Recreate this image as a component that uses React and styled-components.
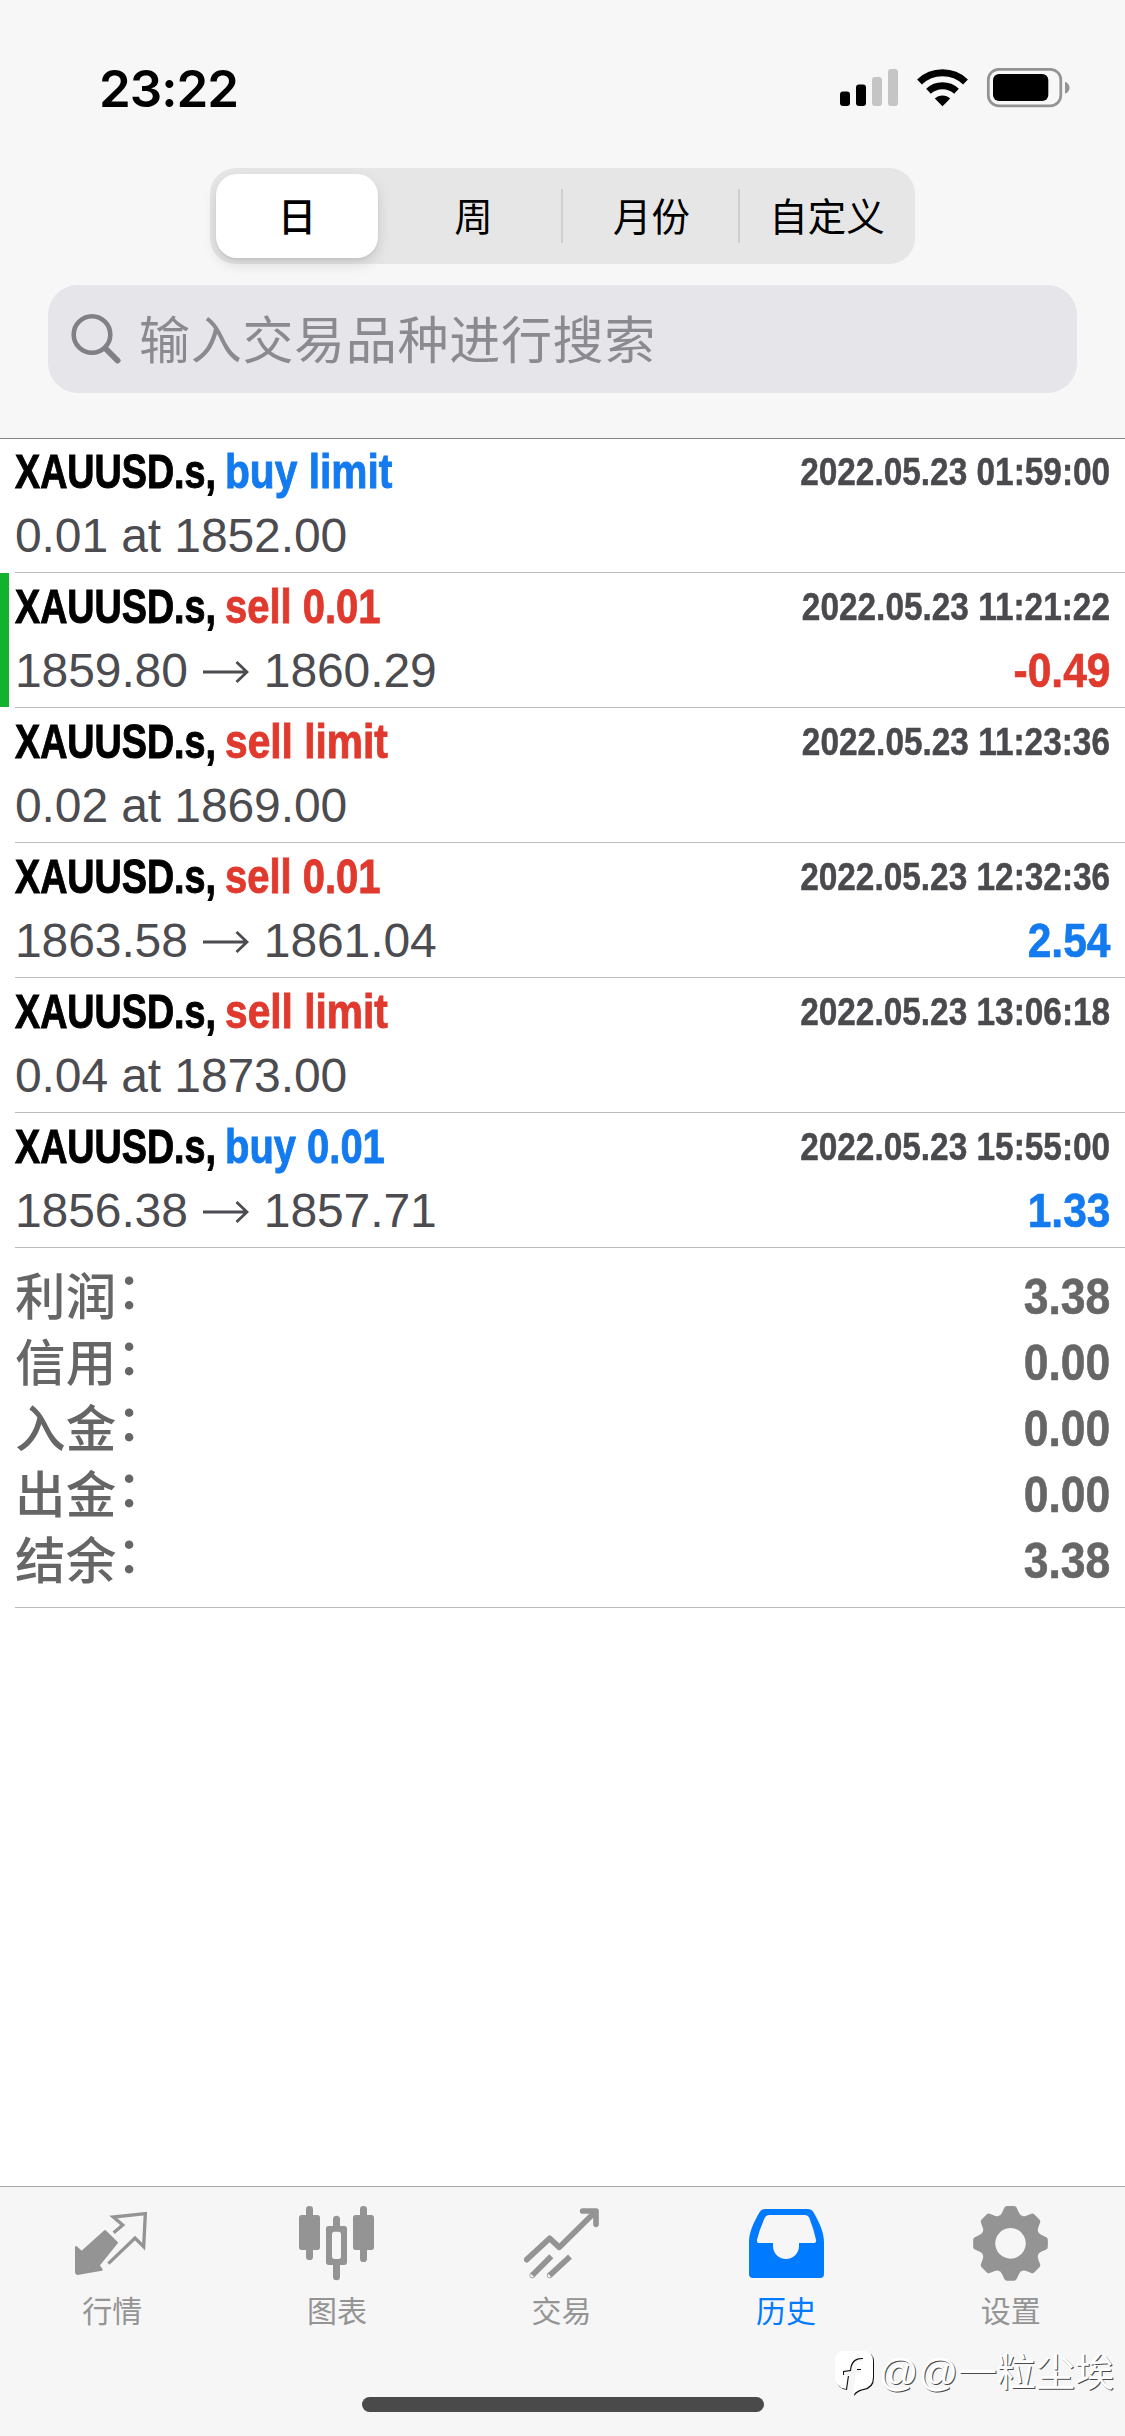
import React from "react";
import styled, { createGlobalStyle } from "styled-components";

const BLUE = "#147aef";
const RED = "#e0392d";

const GlobalStyle = createGlobalStyle`
  * { box-sizing: border-box; }
  body { margin: 0; background: #fff; }
`;

const Screen = styled.div`
  width: 1125px;
  height: 2436px;
  display: flex;
  flex-direction: column;
  overflow: hidden;
  background: #fff;
  font-family: "Liberation Sans", "Noto Sans CJK SC", sans-serif;
`;

const Header = styled.header`
  flex: none;
  height: 439px;
  margin-bottom: -1px;
  padding: 64px 48px 0;
  background: #f7f7f7;
  border-bottom: 1px solid #858585;
  display: flex;
  flex-direction: column;
  align-items: center;
`;

const StatusBar = styled.div`
  align-self: stretch;
  height: 48px;
  margin-bottom: 56px;
  padding: 0 7px 0 51px;
  display: flex;
  justify-content: space-between;
  align-items: center;
`;

const Clock = styled.time`
  padding-top: 2px;
  font: 600 51px/48px Inter, sans-serif;
  letter-spacing: -1px;
  color: #000;
`;

const StatusIcons = styled.svg`
  display: block;
  width: 230px;
  height: 40px;
`;

const Segments = styled.div`
  width: 705px;
  height: 96px;
  padding: 6px 0 6px 6px;
  display: flex;
  align-items: center;
  background: #e6e6e6;
  border-radius: 26px;
`;

const Segment = styled.button`
  flex: none;
  width: ${(p) => p.$width}px;
  height: ${(p) => (p.$active ? 84 : 54)}px;
  border: 0;
  border-left: ${(p) => (p.$divided ? "2px solid #cfcfd1" : "0")};
  padding: 0 0 ${(p) => (p.$active ? 4 : 0)}px ${(p) => p.$inset || 0}px;
  border-radius: ${(p) => (p.$active ? "21px" : "0")};
  background: ${(p) => (p.$active ? "#fff" : "transparent")};
  box-shadow: ${(p) => (p.$active ? "0 6px 14px rgba(0,0,0,.12), 0 2px 3px rgba(0,0,0,.06)" : "none")};
  color: #000;
  font: ${(p) => (p.$active ? 500 : 400)} 38.5px/50px "Noto Sans CJK SC", sans-serif;

  span {
    display: block;
    margin-top: ${(p) => (p.$active ? 0 : -4)}px;
  }
`;

const Search = styled.div`
  align-self: stretch;
  height: 108px;
  margin-top: 21px;
  padding-left: 23px;
  display: flex;
  align-items: center;
  gap: 18px;
  background: #e5e5ea;
  border-radius: 30px;
  color: #8a8a90;
  font: 400 51px/104px "Noto Sans CJK SC", sans-serif;
  letter-spacing: 0.7px;
`;

const Placeholder = styled.span`
  margin-top: -5px;
`;

const SearchIcon = styled.svg`
  width: 50px;
  height: 52px;
  flex: none;
`;

const Deal = styled.article`
  flex: none;
  height: 135px;
  display: flex;
`;

const Marker = styled.div`
  width: 9px;
  height: 134px;
  margin-right: 6px;
  background: ${(p) => (p.$on ? "#12b32c" : "transparent")};
`;

const DealBody = styled.div`
  flex: 1;
  padding: 2px 15px 0 0;
  border-bottom: 1px solid #bcbcbe;
`;

const Line = styled.div`
  height: 64px;
  display: flex;
  line-height: 64px;
  white-space: nowrap;
`;

const Symbol = styled.span`
  flex: 0 0 210px;
  width: 210px;
  font-size: 48px;
  font-weight: 700;
  color: #000;
  -webkit-text-stroke: 1px currentColor;
  transform: scaleX(0.785);
  transform-origin: left;
`;

const Action = styled.span`
  flex: 1;
  font-size: 48px;
  font-weight: 700;
  color: ${(p) => p.$color};
  -webkit-text-stroke: 0.9px currentColor;
  transform: scaleX(${(p) => (p.$numeric ? 0.832 : 0.848)});
  transform-origin: left;
`;

const Stamp = styled.time`
  font-size: 39px;
  line-height: 63px;
  font-weight: 700;
  color: #4a4a4e;
  -webkit-text-stroke: 0.5px currentColor;
  transform: scaleX(0.856);
  transform-origin: right;
`;

const Prices = styled.span`
  flex: 1;
  display: flex;
  align-items: center;
  gap: 14.5px;
  font-size: 48px;
  letter-spacing: -0.1px;
  color: #4c4c50;
`;

const Arrow = styled.svg`
  width: 47px;
  height: 24px;
`;

const Profit = styled.span`
  font-size: 48px;
  font-weight: 700;
  color: ${(p) => p.$color};
  -webkit-text-stroke: 0.7px currentColor;
  transform: scaleX(0.885);
  transform-origin: right;
`;

const Summary = styled.dl`
  flex: none;
  height: 360px;
  margin: 0 0 0 15px;
  padding: 15px 15px 0 0;
  border-bottom: 1px solid #bcbcbe;
`;

const SummaryRow = styled.div`
  height: 66px;
  display: flex;
  justify-content: space-between;
  color: #666;
`;

const Label = styled.dt`
  font: 500 50.5px/60px "Noto Sans CJK SC", sans-serif;
  letter-spacing: 0.3px;
`;

const Colon = styled.span`
  display: inline-block;
  transform: translateY(-6px);
`;

const Value = styled.dd`
  margin: 0;
  font-size: 50px;
  font-weight: 700;
  line-height: 68px;
  -webkit-text-stroke: 0.6px currentColor;
  transform: scaleX(0.89);
  transform-origin: right;
`;

const TabBar = styled.nav`
  position: relative;
  height: 250px;
  flex: none;
  margin-top: auto;
  padding: 18px 2px 0 0;
  display: grid;
  grid-template-columns: repeat(5, 1fr);
  grid-template-rows: 192px 15px;
  background: #f6f6f6;
  border-top: 1px solid #a8a8a8;
`;

const Tab = styled.a`
  display: flex;
  flex-direction: column;
  align-items: center;
  color: ${(p) => (p.$active ? "#007aff" : "#949494")};
`;

const TabIcon = styled.svg`
  display: block;
  width: 75px;
  height: 76px;
  fill: currentColor;
  stroke-linejoin: round;
`;

const TabLabel = styled.span`
  margin-top: 6px;
  font: 400 30px/44px "Noto Sans CJK SC", sans-serif;
`;

const HomeIndicator = styled.div`
  grid-column: 1 / -1;
  justify-self: center;
  width: 402px;
  height: 15px;
  margin-left: 3px;
  border-radius: 8px;
  background: #4a4a4a;
`;

const Watermark = styled.div`
  position: absolute;
  right: 11px;
  bottom: 38px;
  display: flex;
  align-items: center;
  gap: 5px;
  color: #fff;
  font: 400 39px/50px "Liberation Sans", "Noto Sans CJK SC", sans-serif;
  white-space: nowrap;
  text-shadow: 1px 1px 0 #4a4a4a;
`;

const WatermarkLogo = styled.svg`
  width: 40px;
  height: 46px;
  filter: drop-shadow(1.5px 1.5px 0 #111);
`;

const deals = [
  { action: "buy limit", color: BLUE, at: "2022.05.23 01:59:00", order: "0.01 at 1852.00" },
  { action: "sell 0.01", color: RED, at: "2022.05.23 11:21:22", from: "1859.80", to: "1860.29", profit: "-0.49", marked: true },
  { action: "sell limit", color: RED, at: "2022.05.23 11:23:36", order: "0.02 at 1869.00" },
  { action: "sell 0.01", color: RED, at: "2022.05.23 12:32:36", from: "1863.58", to: "1861.04", profit: "2.54" },
  { action: "sell limit", color: RED, at: "2022.05.23 13:06:18", order: "0.04 at 1873.00" },
  { action: "buy 0.01", color: BLUE, at: "2022.05.23 15:55:00", from: "1856.38", to: "1857.71", profit: "1.33" },
];

const totals = [
  ["利润", "3.38"],
  ["信用", "0.00"],
  ["入金", "0.00"],
  ["出金", "0.00"],
  ["结余", "3.38"],
];

const QuotesIcon = () => (
  <>
    <path d="M90 78L126 113L71 181L80 194L7 207L3 203L3 126L20 141Z" stroke="currentColor" strokeWidth="6" />
    <path d="M116 83L143 60L115 36L211 26L206 125L180 99L100 176" fill="none" stroke="currentColor" strokeWidth="10" strokeLinejoin="miter" />
  </>
);

const ChartIcon = () => (
  <>
    <rect x="21" y="3" width="21" height="162" rx="10" />
    <rect y="30" width="63" height="105" rx="8" />
    <path d="M102 63V43a10.500 10.500 0 0 1 21 0V63H136a8 8 0 0 1 8 8V172a8 8 0 0 1-8 8H123v35a10.500 10.500 0 0 1-21 0V180H89a8 8 0 0 1-8-8V71a8 8 0 0 1 8-8ZM107 80a8 8 0 0 0-8 8v66a8 8 0 0 0 8 8h11a8 8 0 0 0 8-8V88a8 8 0 0 0-8-8Z" fillRule="evenodd" />
    <rect x="183" y="3" width="21" height="168" rx="10" />
    <rect x="162" y="30" width="63" height="105" rx="8" />
  </>
);

const TradeIcon = () => (
  <g fill="none" stroke="currentColor" strokeWidth="17">
    <path d="M8 164L77 100L106 127L214 20" strokeLinecap="round" />
    <path d="M176 18H216V58" strokeLinecap="round" />
    <path d="M25 211L82 154M77 211L138 155" />
    <circle cx="25" cy="211" r="1" strokeWidth="15" />
    <circle cx="77" cy="211" r="1" strokeWidth="15" />
  </g>
);

const HistoryIcon = () => (
  <path
    fillRule="evenodd"
    d="M48 12H176Q187 12 193 21C212 54 225 82 225 112V207Q225 219 213 219H12Q0 219 0 207V112C0 82 13 54 32 21Q37 12 48 12ZM62 30Q51 30 47 39Q32 72 24 104Q22 114 32 114H72V123C72 145 89 162 111 162S150 145 150 123V114H193Q203 114 201 104Q194 72 181 39Q177 30 167 30Z"
  />
);

const SettingsIcon = () => (
  <>
    <path
      fillRule="evenodd"
      d="M112.500 27a88 88 0 1 0 .01 0ZM112.500 69a46 46 0 1 1-.01 0Z"
    />
    {[0, 45, 90, 135, 180, 225, 270, 315].map((a) => (
      <path
        key={a}
        transform={`rotate(${a} 112.500 115)`}
        d="M94 8Q96 3 102 3H123Q129 3 131 8L138 23Q141 31 150 34L140 50H85L75 34Q84 31 87 23Z"
      />
    ))}
  </>
);

const tabs = [
  { label: "行情", Icon: QuotesIcon },
  { label: "图表", Icon: ChartIcon },
  { label: "交易", Icon: TradeIcon },
  { label: "历史", Icon: HistoryIcon, active: true },
  { label: "设置", Icon: SettingsIcon },
];

export default function App() {
  return (
    <Screen>
      <GlobalStyle />
      <Header>
        <StatusBar>
          <Clock>23:22</Clock>
          <StatusIcons viewBox="840 69 230 40">
            <rect x="840" y="92.500" width="10" height="14.500" rx="3" />
            <rect x="856" y="85.500" width="10" height="21.500" rx="3" />
            <rect x="872" y="78" width="10" height="29" rx="3" fill="#c5c5c5" />
            <rect x="888" y="70" width="10" height="37" rx="3" fill="#c5c5c5" />
            <path d="M942.500 107.300L934.800 99.600A11 11 0 0 1 950.200 99.600Z" />
            <g fill="none" stroke="#000">
              <path d="M919.500 83A33.500 33.500 0 0 1 965.500 83" strokeWidth="7" />
              <path d="M928.500 92.300A20.500 20.500 0 0 1 956.500 92.300" strokeWidth="6.800" />
            </g>
            <rect x="988.300" y="70.300" width="72.500" height="36.500" rx="10.500" fill="none" stroke="#939393" strokeWidth="2.700" />
            <rect x="993" y="75" width="55.300" height="27" rx="6" />
            <path d="M1065 82.700Q1069.500 84.500 1069.500 88.700T1065 94.700Z" fill="#939393" />
          </StatusIcons>
        </StatusBar>
        <Segments>
          <Segment $active $width={162}><span>日</span></Segment>
          <Segment $width={183} $inset={8}><span>周</span></Segment>
          <Segment $width={177} $divided $inset={2}><span>月份</span></Segment>
          <Segment $width={176} $divided><span>自定义</span></Segment>
        </Segments>
        <Search>
          <SearchIcon viewBox="0 0 50 52" fill="none" stroke="#808086">
            <circle cx="21" cy="21.500" r="18.300" strokeWidth="4.600" />
            <path d="M34.500 35.500L46.500 47.500" strokeWidth="6" strokeLinecap="round" />
          </SearchIcon>
          <Placeholder>输入交易品种进行搜索</Placeholder>
        </Search>
      </Header>

      {deals.map((d) => (
        <Deal key={d.at}>
          <Marker $on={d.marked} />
          <DealBody>
            <Line>
              <Symbol>XAUUSD.s,</Symbol>
              <Action $color={d.color} $numeric={!d.order}>{d.action}</Action>
              <Stamp>{d.at}</Stamp>
            </Line>
            <Line>
              {d.order ? (
                <Prices>{d.order}</Prices>
              ) : (
                <Prices>
                  <span>{d.from}</span>
                  <Arrow viewBox="0 0 47 24" fill="none" stroke="currentColor" strokeWidth="2.800">
                    <path d="M1 13H45M34.500 3L45 13L34.500 23" />
                  </Arrow>
                  <span>{d.to}</span>
                </Prices>
              )}
              {d.profit && <Profit $color={d.profit.startsWith("-") ? RED : BLUE}>{d.profit}</Profit>}
            </Line>
          </DealBody>
        </Deal>
      ))}

      <Summary>
        {totals.map(([label, value]) => (
          <SummaryRow key={label}>
            <Label>
              {label}
              <Colon>：</Colon>
            </Label>
            <Value>{value}</Value>
          </SummaryRow>
        ))}
      </Summary>

      <TabBar>
        {tabs.map(({ label, Icon, active }) => (
          <Tab key={label} $active={active}>
            <TabIcon viewBox="0 0 225 228">
              <Icon />
            </TabIcon>
            <TabLabel>{label}</TabLabel>
          </Tab>
        ))}
        <HomeIndicator />
        <Watermark>
          <WatermarkLogo viewBox="0 0 40 46">
            <path
              fill="#fff"
              d="M10 1H29Q39 1 39 11V27Q39 37 29 39Q23 40 19 45L20 37L22 23H27V19H22Q22 11 29 11V8Q17 7 16 20L9 21V25H14L12 39Q1 37 1 27V11Q1 1 10 1Z"
            />
          </WatermarkLogo>
          <span>@@一粒尘埃</span>
        </Watermark>
      </TabBar>
    </Screen>
  );
}
